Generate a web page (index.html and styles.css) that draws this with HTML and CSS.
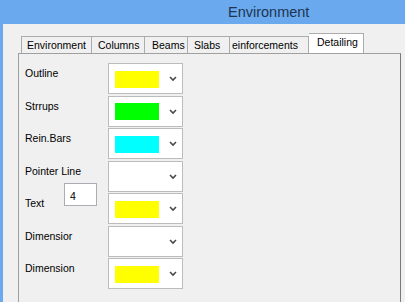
FILE: index.html
```html
<!DOCTYPE html>
<html lang="en">
<head>
    <meta charset="UTF-8">
    <meta name="viewport" content="width=device-width, initial-scale=1.0">
    <title>Environment</title>
    <link rel="stylesheet" href="styles.css">
</head>
<body>
    <div class="titlebar">Environment</div>

    <div class="client">
        <div class="tabs">
            <div class="tab tab-env">Environment</div>
            <div class="tab tab-col">Columns</div>
            <div class="tab tab-beam">Beams</div>
            <div class="tab tab-slab">Slabs</div>
            <div class="tab tab-rein">einforcements</div>
            <div class="tab tab-det active">Detailing</div>
        </div>

        <div class="panel">
            <div class="row">
                <div class="label">Outline</div>
                <div class="combo"><span class="swatch yellow"></span><svg class="arrow" width="8" height="6" viewBox="0 0 8 6"><polyline points="1,1 4,4 7,1"/></svg></div>
            </div>
            <div class="row">
                <div class="label">Strrups</div>
                <div class="combo"><span class="swatch green"></span><svg class="arrow" width="8" height="6" viewBox="0 0 8 6"><polyline points="1,1 4,4 7,1"/></svg></div>
            </div>
            <div class="row">
                <div class="label">Rein.Bars</div>
                <div class="combo"><span class="swatch cyan"></span><svg class="arrow" width="8" height="6" viewBox="0 0 8 6"><polyline points="1,1 4,4 7,1"/></svg></div>
            </div>
            <div class="row">
                <div class="label">Pointer Line</div>
                <div class="combo"><span class="swatch"></span><svg class="arrow" width="8" height="6" viewBox="0 0 8 6"><polyline points="1,1 4,4 7,1"/></svg></div>
            </div>
            <div class="row">
                <div class="label">
                    <span class="label-text">Text</span>
                    <input class="size-box" type="text" value="4">
                </div>
                <div class="combo"><span class="swatch yellow"></span><svg class="arrow" width="8" height="6" viewBox="0 0 8 6"><polyline points="1,1 4,4 7,1"/></svg></div>
            </div>
            <div class="row">
                <div class="label">Dimensior</div>
                <div class="combo"><span class="swatch"></span><svg class="arrow" width="8" height="6" viewBox="0 0 8 6"><polyline points="1,1 4,4 7,1"/></svg></div>
            </div>
            <div class="row">
                <div class="label">Dimension</div>
                <div class="combo"><span class="swatch yellow"></span><svg class="arrow" width="8" height="6" viewBox="0 0 8 6"><polyline points="1,1 4,4 7,1"/></svg></div>
            </div>
        </div>
    </div>
</body>
</html>
```

FILE: styles.css
```css
body {
    margin: 0;
    width: 405px;
    height: 302px;
    overflow: hidden;
    background-color: #f0f0f0;
    font-family: "Liberation Sans", Arial, sans-serif;
    font-size: 10.5px;
    color: #000;
}

/* window caption */
.titlebar {
    height: 24px;
    line-height: 24px;
    padding-left: 228px;
    background-color: #6aa9ee;
    color: #1d3550;
    font-size: 14.5px;
}

.client {
    height: 278px;
    overflow: hidden;
    border-left: 3px solid #6aa9ee;
    padding: 9px 0 0 15px;
    box-sizing: border-box;
}

/* tab strip */
.tabs {
    display: flex;
    align-items: flex-end;
    height: 20px;
    margin-left: 3px;
}
.tab {
    height: 16px;
    line-height: 16px;
    padding-left: 5px;
    border: 1px solid #acacac;
    border-bottom: none;
    border-left: none;
    background-color: #f0f0f0;
    box-sizing: content-box;
    white-space: nowrap;
    overflow: hidden;
}
.tab-env { width: 64px; border-left: 1px solid #acacac; }
.tab-col { width: 46px; padding-left: 6px; }
.tab-beam { width: 35px; padding-left: 7px; }
.tab-slab { width: 35px; padding-left: 6px; }
.tab-rein { width: 76px; padding-left: 2px; }
.tab-det {
    width: 46px;
    padding-left: 8px;
    height: 16px;
    padding-bottom: 3px;
}
.tab.active {
    background-color: #fff;
}

.panel {
    width: 375px;
    height: 250px;
    border: 1px solid #a0a0a0;
    border-right-color: #7a7a7a;
    padding: 9px 0 0 6px;
    box-sizing: content-box;
    display: grid;
    grid-auto-rows: 31px;
    row-gap: 1.5px;
    align-content: start;
}

.row {
    display: flex;
}
.label {
    width: 83px;
    padding-top: 3px;
    line-height: 14px;
    display: flex;
    align-items: flex-start;
}
.label-text {
    width: 39px;
}

.size-box {
    width: 33px;
    height: 23px;
    margin: -13px 0 0 0;
    padding: 3px 0 0 5px;
    border: 1px solid #abadb3;
    background-color: #fff;
    font-family: inherit;
    font-size: 10.5px;
    line-height: 13px;
    box-sizing: border-box;
    vertical-align: top;
    outline: none;
}

/* colour picker combo */
.combo {
    width: 75px;
    height: 31px;
    border: 1px solid #bcbcbc;
    background-color: #fff;
    box-sizing: border-box;
    display: flex;
    align-items: center;
    padding: 0 5px 0 6px;
}
.swatch {
    width: 44px;
    height: 17px;
    margin-top: 1px;
}
.swatch.yellow { background-color: #ffff00; }
.swatch.green { background-color: #00ff00; }
.swatch.cyan { background-color: #00ffff; }

.arrow {
    margin-left: auto;
    margin-top: 1px;
}
.arrow polyline {
    fill: none;
    stroke: #4a4a4a;
    stroke-width: 1.6;
}
```
